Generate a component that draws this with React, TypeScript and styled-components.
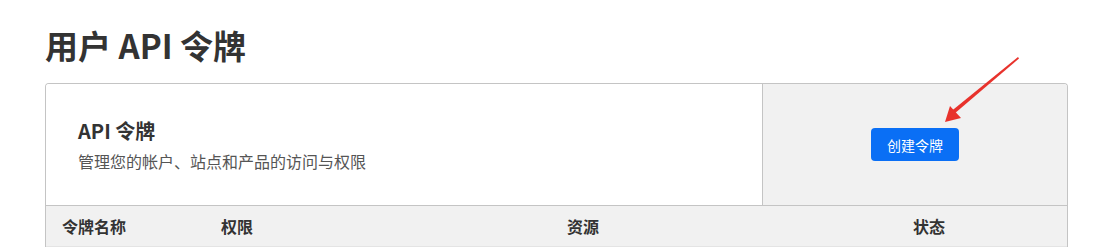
import React from 'react';
import styled, { createGlobalStyle } from 'styled-components';

const GlobalStyle = createGlobalStyle`
  html, body {
    margin: 0;
    padding: 0;
    background: #fff;
    font-family: "Noto Sans CJK SC", "Noto Sans", sans-serif;
    color: #333;
  }
`;

const Page = styled.div`
  position: relative;
  padding: 25px 37px 0 45px;
`;

const PageTitle = styled.h1`
  margin: 0 0 18px;
  font-size: 33px;
  line-height: 40px;
  font-weight: 700;
  color: #333;
`;

const Card = styled.div`
  border: 1px solid #c4c4c4;
  border-bottom: none;
  border-radius: 4px 4px 0 0;
  overflow: hidden;
`;

const Top = styled.div`
  display: grid;
  grid-template-columns: 716px 1fr;
  height: 121px;
  border-bottom: 1px solid #c4c4c4;
`;

const Intro = styled.div`
  display: flex;
  flex-direction: column;
  justify-content: center;
  gap: 4px;
  padding: 0 32px;
  background: #fff;
`;

const IntroTitle = styled.h2`
  margin: 0;
  font-size: 20px;
  line-height: 28px;
  font-weight: 700;
  color: #333;
`;

const IntroText = styled.p`
  margin: 0;
  font-size: 16px;
  line-height: 24px;
  color: #555;
`;

const Side = styled.div`
  display: flex;
  align-items: center;
  justify-content: center;
  background: #f1f1f1;
  border-left: 1px solid #c4c4c4;
`;

const PrimaryButton = styled.button`
  height: 33px;
  padding: 0 16px;
  border: none;
  border-radius: 4px;
  background: #0a6ff5;
  color: #fff;
  font-family: inherit;
  font-size: 14px;
  cursor: pointer;
`;

const HeadRow = styled.div`
  display: grid;
  grid-template-columns: 159px 346px 346px 1fr;
  height: 40px;
  background: #f1f1f1;
  border-bottom: 1px solid #e4e4e4;
`;

const HeadCell = styled.div`
  display: flex;
  align-items: center;
  padding-left: 16px;
  font-size: 16px;
  font-weight: 700;
  color: #333;
`;

const Arrow = styled.svg`
  position: absolute;
  left: 0;
  top: 0;
  pointer-events: none;
`;

const columns = ['令牌名称', '权限', '资源', '状态'];

const App: React.FC = () => {
  return (
    <>
      <GlobalStyle />
      <Page>
        <PageTitle>用户 API 令牌</PageTitle>
        <Card>
          <Top>
            <Intro>
              <IntroTitle>API 令牌</IntroTitle>
              <IntroText>管理您的帐户、站点和产品的访问与权限</IntroText>
            </Intro>
            <Side>
              <PrimaryButton>创建令牌</PrimaryButton>
            </Side>
          </Top>
          <HeadRow>
            {columns.map((c) => (
              <HeadCell key={c}>{c}</HeadCell>
            ))}
          </HeadRow>
        </Card>
        <Arrow width="1105" height="249" viewBox="0 0 1105 249">
          <polygon points="1018,57 1019,58.5 954,114 951.5,111" fill="#e8322c" />
          <polygon points="945,122 950,106 961,118" fill="#e8322c" />
        </Arrow>
      </Page>
    </>
  );
};

export default App;
